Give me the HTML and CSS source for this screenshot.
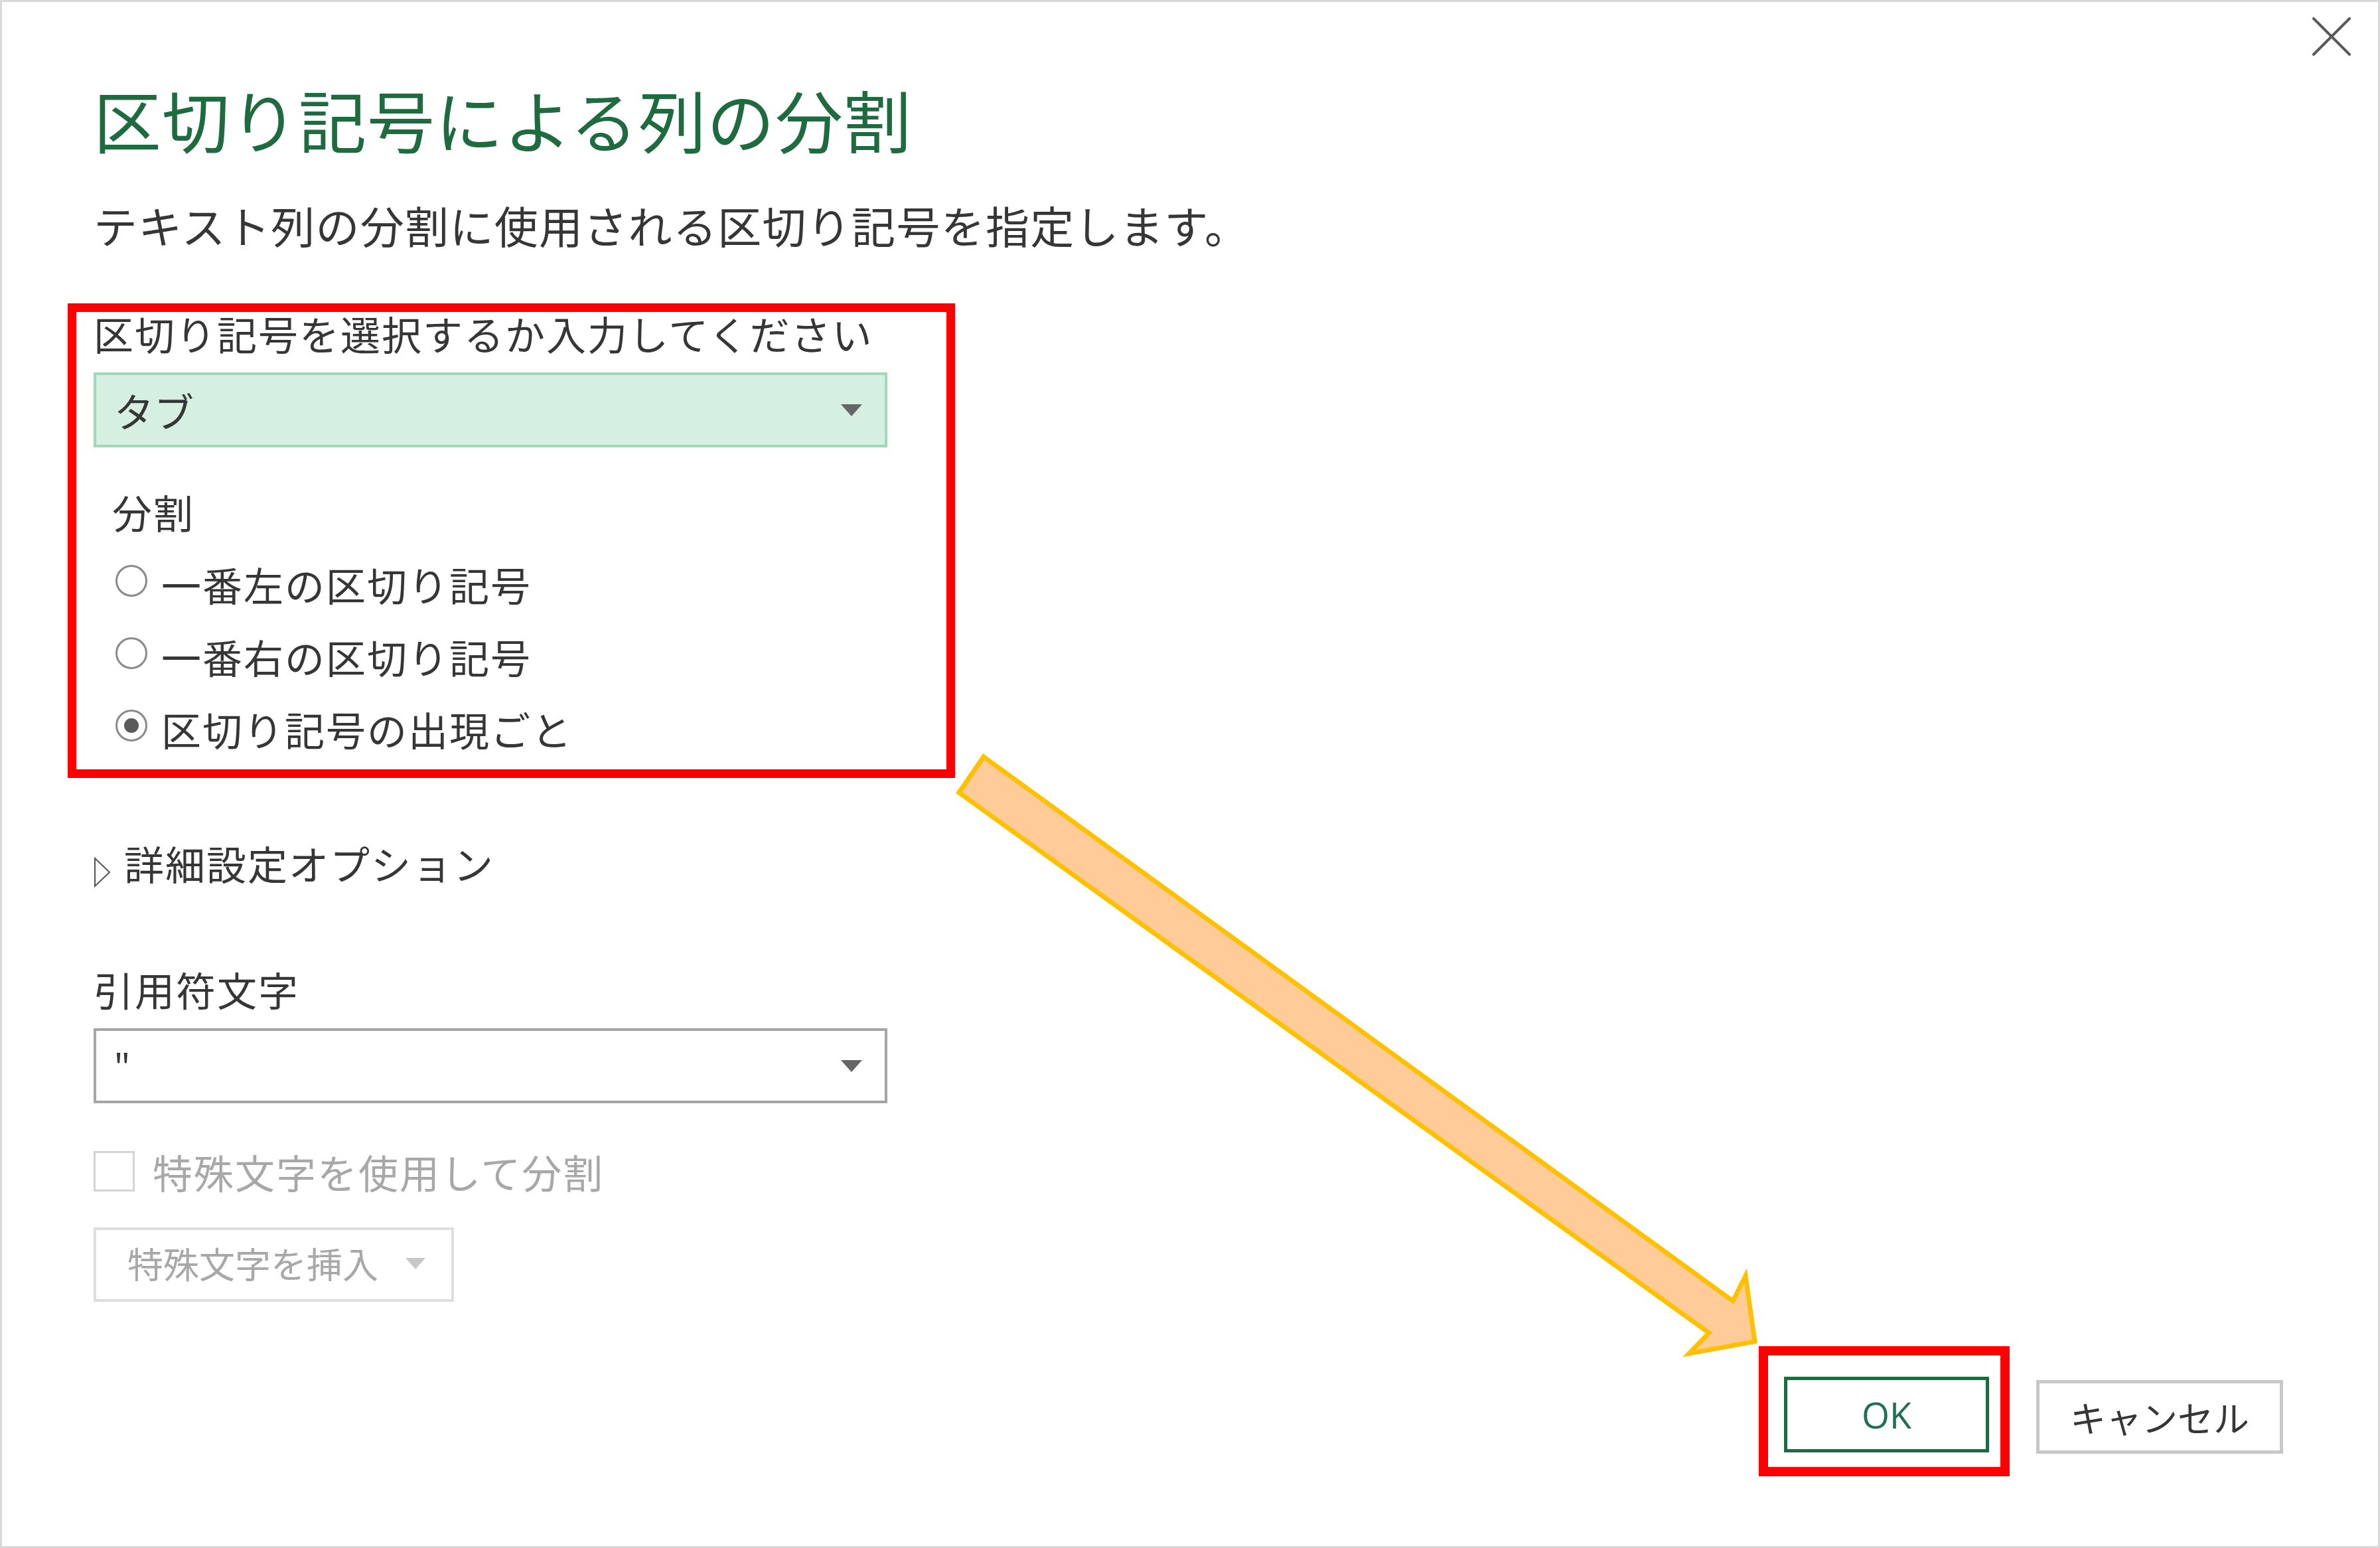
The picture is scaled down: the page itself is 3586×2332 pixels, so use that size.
FILE: index.html
```html
<!DOCTYPE html>
<html lang="ja">
<head>
  <meta charset="UTF-8" />
  <meta name="viewport" content="width=device-width, initial-scale=1.0" />
  <title>区切り記号による列の分割</title>
  <link rel="stylesheet" href="styles.css">
</head>
<body>
  <div class="dialog">
    <!-- 閉じるボタン -->
    <button class="close" aria-label="閉じる">
      <svg width="58" height="58" viewBox="0 0 58 58">
        <path d="M2 2 L56 56 M56 2 L2 56" stroke="#5a5a5a" stroke-width="4" stroke-linecap="round" />
      </svg>
    </button>

    <h1 class="title">区切り記号による列の分割</h1>
    <p class="subtitle">テキスト列の分割に使用される区切り記号を指定します。</p>

    <!-- 赤枠で囲まれた区切り記号の設定 -->
    <div class="highlight">
      <label class="field-label">区切り記号を選択するか入力してください</label>
      <div class="select select-active">
        <span>タブ</span>
        <i class="caret"></i>
      </div>

      <div class="group-label">分割</div>
      <ul class="radios">
        <li><span class="radio"></span>一番左の区切り記号</li>
        <li><span class="radio"></span>一番右の区切り記号</li>
        <li><span class="radio checked"></span>区切り記号の出現ごと</li>
      </ul>
    </div>

    <div class="advanced">
      <svg class="expander" width="28" height="46" viewBox="0 0 28 46">
        <polygon points="2,2 24,23 2,44" fill="none" stroke="#555" stroke-width="2" />
      </svg>
      <span>詳細設定オプション</span>
    </div>

    <label class="field-label quote-label">引用符文字</label>
    <div class="select">
      <span class="quote">"</span>
      <i class="caret"></i>
    </div>

    <div class="check-row">
      <span class="checkbox"></span>
      <span>特殊文字を使用して分割</span>
    </div>

    <button class="insert" disabled>
      <span>特殊文字を挿入</span>
      <i class="caret caret-light"></i>
    </button>

    <div class="footer">
      <div class="ok-highlight">
        <button class="btn btn-ok">OK</button>
      </div>
      <button class="btn btn-cancel">キャンセル</button>
    </div>
  </div>

  <!-- 注釈の矢印 -->
  <svg class="annotation-arrow" width="3586" height="2332" viewBox="0 0 3586 2332">
    <polygon points="1482,1140 2611,1960 2630,1922 2644,2021 2545,2039 2575,2008 1445,1194"
      fill="#ffcc99" stroke="#ffc000" stroke-width="7" stroke-linejoin="miter" />
  </svg>
</body>
</html>
```

FILE: styles.css
```css
:root {
  --verde: #1e6b3f;
  --texto: #363636;
  --desativado: #a8a8a8;
  --vermelho: #ff0000;
}

* {
  box-sizing: border-box;
  margin: 0;
  padding: 0;
}

body {
  position: relative;
  font-family: "Noto Sans CJK JP", "Noto Sans", sans-serif;
  color: var(--texto);
  background: #ffffff;
}

button {
  font: inherit;
  color: inherit;
  background: #ffffff;
  cursor: default;
}

.dialog {
  position: relative;
  width: 3586px;
  height: 2332px;
  border: 3px solid #d9d9d9;
  padding: 125px 0 0 138px;
  overflow: hidden;
}

.close {
  position: absolute;
  top: 23px;
  right: 41px;
  border: none;
  background: none;
  line-height: 0;
}

.title {
  font-size: 102px;
  line-height: 102px;
  font-weight: 400;
  letter-spacing: 1px;
  color: var(--verde);
}

.subtitle {
  margin-top: 75px;
  font-size: 66px;
  line-height: 66px;
  letter-spacing: 1.3px;
}

.highlight {
  width: 1337px;
  margin: 86px 0 0 -39px;
  padding: 2px 0 31px 26px;
  border: 13px solid var(--vermelho);
}

.field-label,
.group-label,
.radios li,
.advanced,
.check-row {
  font-size: 60px;
  line-height: 60px;
  letter-spacing: 2px;
}

.field-label {
  display: block;
}

.select {
  display: flex;
  align-items: center;
  justify-content: space-between;
  width: 1196px;
  height: 113px;
  margin-top: 29px;
  padding: 0 34px 0 27px;
  border: 4px solid #a6a6a6;
  font-size: 60px;
  line-height: 60px;
}

.select-active {
  background: #d5efe0;
  border-color: #a2d8b7;
}

.caret {
  display: block;
  width: 0;
  height: 0;
  border-left: 16px solid transparent;
  border-right: 16px solid transparent;
  border-top: 18px solid #666666;
}

.caret-light {
  margin-left: 41px;
  border-left-width: 15px;
  border-right-width: 15px;
  border-top: 17px solid #c8c8c8;
}

.group-label {
  margin: 67px 0 0 28px;
}

.radios {
  list-style: none;
  margin-left: 33px;
}

.radios li {
  display: flex;
  align-items: flex-start;
  margin-top: 49px;
}

.radio {
  position: relative;
  flex: none;
  width: 48px;
  height: 48px;
  margin: 1px 21px 0 0;
  border: 3px solid #8a8a8a;
  border-radius: 50%;
}

.radio.checked::after {
  content: "";
  position: absolute;
  top: 10px;
  left: 10px;
  width: 22px;
  height: 22px;
  border-radius: 50%;
  background: #5a5a5a;
}

.advanced {
  display: flex;
  align-items: flex-start;
  margin-top: 98px;
}

.expander {
  margin: 21px 18px 0 0;
}

.quote-label {
  margin-top: 123px;
}

.select .quote {
  font-family: "Open Sans", sans-serif;
  letter-spacing: 0;
}

.check-row {
  display: flex;
  align-items: center;
  margin-top: 72px;
  color: var(--desativado);
}

.checkbox {
  width: 62px;
  height: 61px;
  margin-right: 27px;
  border: 3px solid #d4d4d4;
}

.insert {
  display: flex;
  align-items: center;
  width: 543px;
  height: 112px;
  margin-top: 54px;
  padding: 0 0 4px 47px;
  border: 4px solid #dedede;
  font-size: 54px;
  line-height: 54px;
  color: var(--desativado);
}

.footer {
  display: flex;
  justify-content: flex-end;
  align-items: flex-start;
  margin-top: 67px;
  padding-right: 143px;
}

.ok-highlight {
  padding: 32px 17px 22px 24px;
  border: 14px solid var(--vermelho);
}

.btn {
  display: flex;
  align-items: center;
  justify-content: center;
  font-size: 54px;
  line-height: 54px;
}

.btn-ok {
  width: 309px;
  height: 114px;
  border: 5px solid var(--verde);
  color: #1f6f50;
  font-family: "Open Sans", sans-serif;
}

.btn-cancel {
  width: 372px;
  height: 111px;
  margin: 51px 0 0 40px;
  border: 5px solid #c8c8c8;
}

.annotation-arrow {
  position: absolute;
  top: 0;
  left: 0;
  pointer-events: none;
}
```
